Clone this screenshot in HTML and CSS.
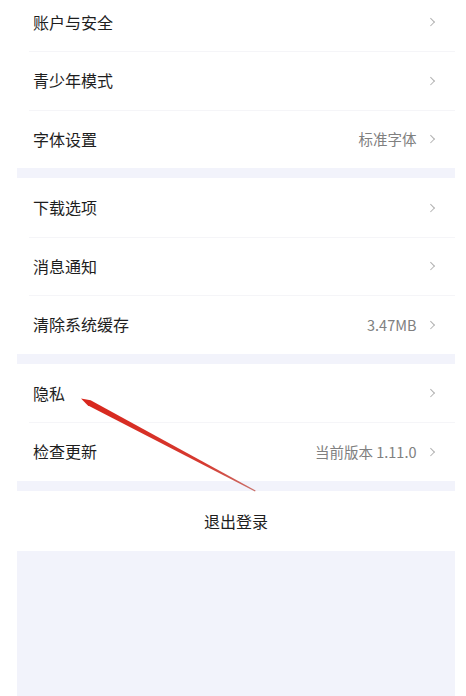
FILE: index.html
```html
<!DOCTYPE html>
<html lang="zh-CN">
<head>
    <meta charset="UTF-8">
    <meta name="viewport" content="width=device-width, initial-scale=1.0">
    <title>设置</title>
    <link rel="stylesheet" href="styles.css">
</head>
<body>
<div class="settings">
    <div class="group">
        <div class="row"><span class="label">账户与安全</span><span class="chevron"></span></div>
        <div class="row"><span class="label">青少年模式</span><span class="chevron"></span></div>
        <div class="row"><span class="label">字体设置</span><span class="value">标准字体</span><span class="chevron"></span></div>
    </div>
    <div class="group">
        <div class="row"><span class="label">下载选项</span><span class="chevron"></span></div>
        <div class="row"><span class="label">消息通知</span><span class="chevron"></span></div>
        <div class="row"><span class="label">清除系统缓存</span><span class="value">3.47MB</span><span class="chevron"></span></div>
    </div>
    <div class="group">
        <div class="row"><span class="label">隐私</span><span class="chevron"></span></div>
        <div class="row"><span class="label">检查更新</span><span class="value">当前版本 1.11.0</span><span class="chevron"></span></div>
    </div>
    <div class="group">
        <div class="logout">退出登录</div>
    </div>
</div>

<!-- red annotation arrow drawn over the list -->
<svg class="annotation" width="466" height="696" viewBox="0 0 466 696">
    <defs>
        <linearGradient id="fade" x1="82" y1="399" x2="256" y2="491" gradientUnits="userSpaceOnUse">
            <stop offset="0" stop-color="#d8261c"/>
            <stop offset="0.7" stop-color="#d63a30"/>
            <stop offset="1" stop-color="#c9736c"/>
        </linearGradient>
    </defs>
    <polygon points="81,398.5 90.6,400.3 255.6,490.4 255,491.5 87.6,405.3" fill="url(#fade)"/>
</svg>
</body>
</html>
```

FILE: styles.css
```css
body {
    margin: 0;
    background: #ffffff;
    font-family: "Noto Sans CJK SC", "Noto Sans", sans-serif;
    color: #1c1c1c;
    height: 696px;
    overflow: hidden;
    position: relative;
}

.settings {
    margin: -7.5px 11px 0 17px;
    background-color: #f2f3fb; /* light lavender gaps between groups */
    display: flex;
    flex-direction: column;
    gap: 10px;
    min-height: 720px;
}

.group {
    background-color: #ffffff;
}

.row {
    position: relative;
    height: 58.5px;
    display: flex;
    align-items: center;
    padding: 0 20px 0 16px;
    box-sizing: border-box;
}

.row + .row::before {
    content: "";
    position: absolute;
    top: 0;
    left: 12px;
    right: 0;
    height: 1px;
    background-color: #f5f5f8;
}

.label {
    flex: 1;
    font-size: 16px;
    color: #1e1e1e;
}

.value {
    font-size: 14.5px;
    color: #808080;
    margin-right: 11px;
}

.chevron {
    width: 4.5px;
    height: 4.5px;
    border-top: 1.3px solid #b0b0b0;
    border-right: 1.3px solid #b0b0b0;
    transform: rotate(45deg);
    margin-right: 2px;
}

.logout {
    height: 60px;
    display: flex;
    align-items: center;
    justify-content: center;
    font-size: 16px;
    color: #1e1e1e;
}

.annotation {
    position: absolute;
    top: 0;
    left: 0;
    pointer-events: none;
}
```
